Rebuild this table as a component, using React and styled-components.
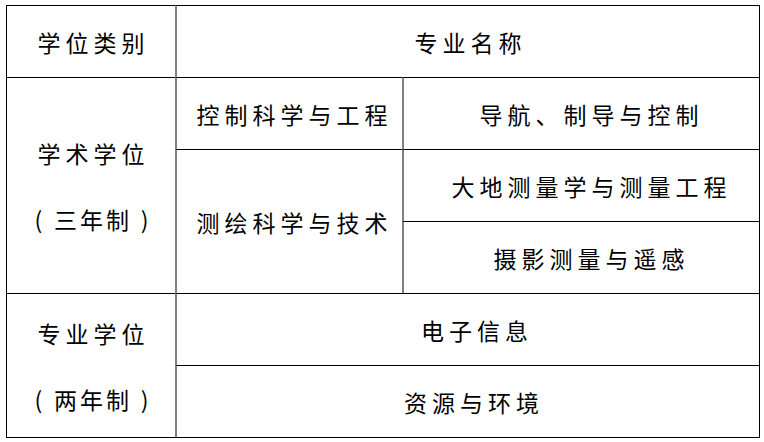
import React from 'react';
import styled, { createGlobalStyle } from 'styled-components';

const GlobalStyle = createGlobalStyle`
  html, body {
    margin: 0;
    padding: 0;
    background: #ffffff;
  }
  body {
    font-family: "Noto Sans CJK SC", "Noto Sans", sans-serif;
    color: #000;
  }
`;

const Page = styled.div`
  padding: 5px 0 0 6px;
`;

const Table = styled.table`
  border-collapse: separate;
  border-spacing: 0;
  table-layout: fixed;
  width: 753px;
  border-right: 1px solid #000;
  border-bottom: 1px solid #000;
`;

const Col = styled.col`
  width: ${(p) => p.$w}px;
`;

const Row = styled.tr`
  height: 72px;
`;

const Cell = styled.td`
  box-sizing: border-box;
  border-top: 1px solid #000;
  border-left: ${(p) => (p.$first ? '1px solid #000' : '2px solid #808080')};
  padding: 0 0 0 ${(p) => p.$shift || 0}px;
  text-align: center;
  vertical-align: middle;
  font-size: 23px;
  letter-spacing: 5px;
  line-height: 30px;
  font-weight: 400;
  white-space: nowrap;
`;

const Lines = styled.div`
  display: flex;
  flex-direction: column;
  align-items: center;
  gap: 36px;
`;

const ParenLine = styled.div`
  display: flex;
  justify-content: space-between;
  align-items: center;
  width: 114px;
  margin-left: -4px;
  letter-spacing: 0;
`;

const Years = styled.span`
  letter-spacing: 3px;
  margin-right: -3px;
`;

const majors = [
  ['控制科学与工程', '导航、制导与控制'],
  ['测绘科学与技术', '大地测量学与测量工程'],
  [null, '摄影测量与遥感'],
];

const Degree = ({ name, years }) => (
  <Lines>
    <span>{name}</span>
    <ParenLine>
      <span>(</span>
      <Years>{years}</Years>
      <span>)</span>
    </ParenLine>
  </Lines>
);

export default function App() {
  return (
    <>
      <GlobalStyle />
      <Page>
        <Table>
          <colgroup>
            <Col $w={169} />
            <Col $w={227} />
            <Col $w={357} />
          </colgroup>
          <tbody>
            <Row>
              <Cell $first $shift={5}>学位类别</Cell>
              <Cell colSpan={2} $shift={5}>专业名称</Cell>
            </Row>
            <Row>
              <Cell $first rowSpan={3} $shift={5}>
                <Degree name="学术学位" years="三年制" />
              </Cell>
              <Cell $shift={10}>{majors[0][0]}</Cell>
              <Cell $shift={20}>{majors[0][1]}</Cell>
            </Row>
            <Row>
              <Cell rowSpan={2} $shift={10}>{majors[1][0]}</Cell>
              <Cell $shift={20}>{majors[1][1]}</Cell>
            </Row>
            <Row>
              <Cell $shift={20}>{majors[2][1]}</Cell>
            </Row>
            <Row>
              <Cell $first rowSpan={2} $shift={5}>
                <Degree name="专业学位" years="两年制" />
              </Cell>
              <Cell colSpan={2} $shift={18}>电子信息</Cell>
            </Row>
            <Row>
              <Cell colSpan={2} $shift={12}>资源与环境</Cell>
            </Row>
          </tbody>
        </Table>
      </Page>
    </>
  );
}
